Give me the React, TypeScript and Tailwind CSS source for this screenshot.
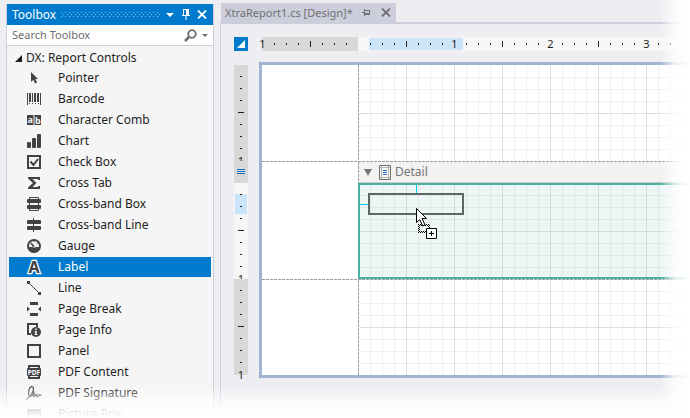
import React, { useLayoutEffect, useRef, useState } from 'react';
import clsx from 'clsx';

interface ToolItem {
  name: string;
  icon: React.ReactNode;
}

interface RulerCellProps {
  index: number;
  label?: string;
  clip?: boolean;
}

const TOOLS: ToolItem[] = [
  { name: 'Pointer', icon: <path d="M5 2v10l2.4-2.2L9 13.5l2-.9-1.7-3.5H12z" /> },
  {
    name: 'Barcode',
    icon: <path d="M1 2h1v12H1zM3 2h2v9H3zM6 2h1v9H6zM8 2h2v9H8zM11 2h2v9h-2zM14 2h1v12h-1zM3 12h1v1H3zM6 12h1v1H6zM9 12h1v1H9zM12 12h1v1h-1z" />,
  },
  {
    name: 'Character Comb',
    icon: (
      <>
        <path d="M1 3h6.500v10H1zM8.500 3H15v10H8.500z" />
        <text x="4.200" y="11" fontSize="9" fontWeight="700" textAnchor="middle" fill="#f5f5f5">a</text>
        <text x="11.800" y="11.500" fontSize="9" fontWeight="700" textAnchor="middle" fill="#f5f5f5">b</text>
      </>
    ),
  },
  {
    name: 'Chart',
    icon: (
      <>
        <rect x="1" y="9" width="4" height="6" rx="1" />
        <rect x="6" y="5" width="4" height="10" rx="1" />
        <rect x="11" y="1" width="4" height="14" rx="1" />
      </>
    ),
  },
  {
    name: 'Check Box',
    icon: <path d="M2 2h12v12H2zM4.500 7.500l3 3.500 4.500-6" fill="none" stroke="currentColor" strokeWidth="2" />,
  },
  { name: 'Cross Tab', icon: <path d="M2 2h12v3h-1.500l-1-1H6.500l4 4-4 4h5l1-1H14v3H2v-1.500L7 8 2 3.500z" /> },
  {
    name: 'Cross-band Box',
    icon: (
      <>
        <rect x="1" y="3" width="14" height="4" rx="1" />
        <rect x="1" y="9" width="14" height="4" rx="1" />
        <path d="M3.500 3V1.500h9V3M3.500 7v2M12.500 7v2M3.500 13v1.500h9V13" fill="none" stroke="currentColor" />
      </>
    ),
  },
  {
    name: 'Cross-band Line',
    icon: (
      <>
        <rect x="1" y="3" width="14" height="4" rx="1" />
        <rect x="1" y="9" width="14" height="4" rx="1" />
        <path d="M7 1h1v14H7z" />
      </>
    ),
  },
  {
    name: 'Gauge',
    icon: (
      <>
        <circle cx="8" cy="8" r="6" fill="none" stroke="currentColor" strokeWidth="2" />
        <path d="M2 9h4.500l1.500 1 1.500-1H14a6 5.500 0 0 1-12 0z" />
        <path d="M5 5l3 4" fill="none" stroke="currentColor" strokeWidth="1.500" />
        <path d="M8 3v1M11 5.500l1-.5" stroke="currentColor" />
      </>
    ),
  },
  {
    name: 'Label',
    icon: (
      <text x="8" y="14" fontSize="16" fontWeight="700" textAnchor="middle" stroke="#fff" strokeWidth="2.500" paintOrder="stroke">A</text>
    ),
  },
  {
    name: 'Line',
    icon: (
      <>
        <path d="M1 1h3v3H1zM12 12h3v3h-3z" />
        <path d="M3 3l10 10" stroke="currentColor" />
      </>
    ),
  },
  { name: 'Page Break', icon: <path d="M4 1h8v3H4zM4 12h8v3H4zM1 5.500L4 8l-3 2.500zM15 5.500L12 8l3 2.500z" /> },
  {
    name: 'Page Info',
    icon: (
      <>
        <path d="M5 12H2V2h9v3" fill="none" stroke="currentColor" strokeWidth="2" />
        <circle cx="10" cy="10" r="5" />
        <path d="M9.200 6.500h1.600V8H9.200zM8.500 9h2.300v3h.7v1h-3v-1h.7v-2h-.7z" fill="#f5f5f5" />
      </>
    ),
  },
  { name: 'Panel', icon: <path d="M2 2h12v12H2z" fill="none" stroke="currentColor" strokeWidth="2" /> },
  {
    name: 'PDF Content',
    icon: (
      <>
        <path d="M3 5V2h10v3M3 11v3h10v-3" fill="none" stroke="currentColor" strokeWidth="2" />
        <rect x="1" y="4" width="14" height="8" rx="1" />
        <text x="8" y="10.500" fontSize="6.500" fontWeight="700" textAnchor="middle" fill="#fff">PDF</text>
      </>
    ),
  },
  {
    name: 'PDF Signature',
    icon: (
      <path
        d="M0 14.500C3 13 8 7 7.500 3.500 7.200.5 3.800 1 3 5c-.6 3.500-.5 6.500 1 6.500s3.500-3 4-4c.4 1.500-.8 4.500 0 4.500s1.700-3 2.500-3-.2 3 .8 3S13 9.500 13.500 9.500s.5 1.500 2 .5"
        fill="none"
        stroke="currentColor"
        strokeWidth="1.200"
      />
    ),
  },
  {
    name: 'Picture Box',
    icon: <path d="M1 3h14v11H1zM3 12h10l-3-4-2 2-2-2z" fillRule="evenodd" />,
  },
];

const SELECTED_TOOL = 'Label';

const TICK_SPACING = 12;

// Minor lines every 12px, major lines every 48px
const GRID =
  'bg-[linear-gradient(to_right,transparent_47px,#dedede_47px),linear-gradient(to_bottom,transparent_47px,#dedede_47px),linear-gradient(to_right,transparent_11px,#f0f0f0_11px),linear-gradient(to_bottom,transparent_11px,#f0f0f0_11px)] bg-[size:48px_48px,48px_48px,12px_12px,12px_12px]';

const DETAIL_GRID =
  'bg-[linear-gradient(to_right,transparent_47px,#d2dcda_47px),linear-gradient(to_bottom,transparent_47px,#d2dcda_47px),linear-gradient(to_right,transparent_11px,#dfe8e6_11px),linear-gradient(to_bottom,transparent_11px,#dfe8e6_11px)] bg-[size:48px_48px,48px_48px,12px_12px,12px_12px] bg-[position:1px_1px] bg-origin-border';

const DashedRow = () => (
  <div className="h-px shrink-0 bg-[repeating-linear-gradient(to_right,#9c9c9c_0_3px,transparent_3px_4px)]" />
);

const DashedColumn = () => (
  <div className="w-px shrink-0 bg-[repeating-linear-gradient(to_bottom,#9c9c9c_0_3px,transparent_3px_4px)]" />
);

const Toolbox = () => (
  <aside className="flex w-52 shrink-0 flex-col border-x border-[#cccedb] bg-[#f5f5f5]" aria-label="Toolbox">
    {/* Title bar */}
    <header className="flex h-[21px] shrink-0 items-center bg-[#007acc] pr-px pl-[5px] text-white">
      <h2 className="w-[49px] text-[12px]">Toolbox</h2>
      <svg className="h-[5px] min-w-0 flex-1" stroke="#80bde6" strokeDasharray="1 3" shapeRendering="crispEdges" aria-hidden="true">
        <line x1="0" y1="0.5" x2="100%" y2="0.5" />
        <line x1="2" y1="2.5" x2="100%" y2="2.5" />
        <line x1="0" y1="4.5" x2="100%" y2="4.5" />
      </svg>
      <button className="flex size-5 items-center justify-center" aria-label="Window options">
        <svg width="8" height="4" viewBox="0 0 8 4" fill="currentColor"><path d="M0 0h8L4 4z" /></svg>
      </button>
      <button className="flex h-5 w-3 items-center justify-center" aria-label="Pin">
        <svg width="8" height="11" viewBox="0 0 8 11" fill="currentColor">
          <path d="M1 0h6v6h1v1H4.500v4h-1V7H0V6h1zM2 1v5h2V1z" fillRule="evenodd" />
        </svg>
      </button>
      <button className="flex size-5 items-center justify-center" aria-label="Close">
        <svg width="10" height="9" viewBox="0 0 10 9" stroke="currentColor" strokeWidth="1.800"><path d="M1 .5l8 8M9 .5l-8 8" /></svg>
      </button>
    </header>

    {/* Search */}
    <div className="flex h-[21px] shrink-0 items-center border-b border-[#cccedb] bg-white pl-[5px] text-[#6d6d6d]">
      <input
        type="text"
        aria-label="Search Toolbox"
        placeholder="Search Toolbox"
        className="min-w-0 flex-1 text-[11px] outline-none placeholder:text-[#6d6d6d]"
      />
      <button aria-label="Search">
        <svg width="13" height="13" viewBox="0 0 13 13" fill="none" stroke="currentColor">
          <circle cx="8" cy="5" r="3.800" strokeWidth="1.800" />
          <path d="M5.500 7.500L1 12" strokeWidth="2.500" />
        </svg>
      </button>
      <button className="flex w-4 justify-center" aria-label="Search options">
        <svg width="6" height="3" viewBox="0 0 6 3" fill="currentColor"><path d="M0 0h6L3 3z" /></svg>
      </button>
    </div>

    {/* Tool list */}
    <div className="px-0.5 pt-0.5 text-[#1e1e1e]">
      <button className="flex h-5 items-center gap-1 pl-1.5 text-left text-[12px]" aria-expanded="true">
        <svg width="7" height="7" viewBox="0 0 7 7" fill="currentColor"><path d="M7 0v7H0z" /></svg>
        DX: Report Controls
      </button>
      <ul className="flex flex-col gap-px">
        {TOOLS.map((tool) => (
          <li key={tool.name}>
            <button
              className={clsx(
                'flex h-5 w-full items-center gap-4 pl-[17px] text-left text-[12px]',
                tool.name === SELECTED_TOOL && 'bg-[#007acc] text-white',
              )}
            >
              <svg className="shrink-0 overflow-visible text-[#424242]" width="16" height="16" viewBox="0 0 16 16" fill="currentColor" aria-hidden="true">
                {tool.icon}
              </svg>
              {tool.name}
            </button>
          </li>
        ))}
      </ul>
    </div>
  </aside>
);

const HorizontalCell: React.FC<RulerCellProps> = ({ index, label }) => {
  if (index % 8 === 0) {
    return (
      <div className="flex w-3 shrink-0 items-center">
        <span className="flex w-px justify-center">{label}</span>
      </div>
    );
  }
  return (
    <div className="flex w-3 shrink-0 items-center">
      <div className={clsx('w-px bg-[#1e1e1e]', index % 8 === 4 ? 'h-1.5' : 'h-0.5')} />
    </div>
  );
};

const VerticalCell: React.FC<RulerCellProps> = ({ index, clip }) => {
  if (index === 8) {
    return (
      <div className={clsx('flex h-3 shrink-0 items-end justify-center', clip && 'overflow-hidden')}>
        <span className="flex h-px items-center">1</span>
      </div>
    );
  }
  return (
    <div className="flex h-3 shrink-0 items-end justify-center">
      <div className={clsx('h-px bg-[#1e1e1e]', index === 4 ? 'w-1.5' : 'w-0.5')} />
    </div>
  );
};

const UNIT = [1, 2, 3, 4, 5, 6, 7, 8];

const HorizontalRuler = () => {
  const scaleRef = useRef<HTMLDivElement>(null);
  const [tickCount, setTickCount] = useState(0);

  // Only as many ticks as fit into the visible part of the page
  useLayoutEffect(() => {
    const update = () => {
      if (scaleRef.current) {
        setTickCount(Math.floor(scaleRef.current.clientWidth / TICK_SPACING));
      }
    };
    update();
    window.addEventListener('resize', update);
    return () => window.removeEventListener('resize', update);
  }, []);

  return (
    <div className="flex h-3.5 min-w-0 flex-1 bg-[#f6f6f6] text-[11px] text-[#1e1e1e]">
      <div className="flex w-24 shrink-0 bg-[#d8d8d8]">
        {UNIT.map((n) => (
          <HorizontalCell key={n} index={n - 1} label="1" />
        ))}
      </div>
      <div ref={scaleRef} className="relative min-w-0 flex-1">
        <div className="absolute inset-y-px left-[11px] w-[94px] bg-[#cce4f7]" />
        <div className="relative flex h-full">
          {Array.from({ length: tickCount }, (_, i) => (
            <HorizontalCell key={i} index={i} label={i === 0 ? '' : String(i / 8)} />
          ))}
        </div>
      </div>
    </div>
  );
};

const VerticalRuler = () => (
  <div className="w-3.5 shrink-0 pt-[3px] text-[11px] text-[#1e1e1e]">
    <div className="h-[118px] bg-[#d8d8d8]">
      {UNIT.map((n) => (
        <VerticalCell key={n} index={n} clip />
      ))}
      <div className="flex flex-col items-center gap-px pt-2">
        <div className="h-px w-2 bg-[#0e70c0]" />
        <div className="h-px w-2 bg-[#0e70c0]" />
        <div className="h-px w-2 bg-[#0e70c0]" />
      </div>
    </div>
    <div className="relative bg-[#f6f6f6]">
      <div className="absolute inset-x-px top-[11px] h-5 bg-[#cce4f7]" />
      <div className="relative">
        {UNIT.map((n) => (
          <VerticalCell key={n} index={n} clip />
        ))}
      </div>
    </div>
    <div className="bg-[#d8d8d8]">
      {UNIT.map((n) => (
        <VerticalCell key={n} index={n} />
      ))}
    </div>
  </div>
);

const DragCursor = () => (
  <svg className="absolute top-[23px] left-14" width="22" height="31" viewBox="0 0 22 31" aria-hidden="true">
    <path
      d="M2 16.500h12M3 17.500h11M2 24.500h12M3 23.500h11M2.500 16v9M3.500 17v8M13.500 17v8M12.500 16v9"
      fill="none"
      stroke="#000"
      strokeDasharray="1 1"
      shapeRendering="crispEdges"
    />
    <path d="M.5.5v14l3.200-3 3 6.500 2.300-1-2.900-6.500h4.400z" fill="#fff" stroke="#000" />
    <path d="M10.500 20.500h10v10h-10z" fill="#fff" stroke="#000" />
    <path d="M15 23h1v2h2v1h-2v2h-1v-2h-2v-1h2z" fill="#000" />
  </svg>
);

const ReportSurface = () => (
  <div className="flex min-w-0 flex-1 flex-col border-y-3 border-l-3 border-[#a0b4d2] bg-white">
    <div className="flex h-24">
      <div className="w-24 shrink-0" />
      <DashedColumn />
      <div className="flex-1 pt-px">
        <div className={clsx('h-full', GRID)} />
      </div>
    </div>
    <DashedRow />

    {/* Detail band */}
    <div className="flex h-[21px]">
      <div className="w-24 shrink-0" />
      <DashedColumn />
      <button className="flex flex-1 items-center border-b border-[#c8c8c8] bg-[#f2f2f2] pl-[5px] text-left text-[12px] text-[#767676]">
        <svg width="8" height="7" viewBox="0 0 8 7" fill="currentColor"><path d="M0 0h8L4 7z" /></svg>
        <svg className="mr-1 ml-[7px]" width="12" height="15" viewBox="0 0 12 15" fill="none">
          <path d="M.5.5h11v14H.5z" fill="#f8f8f8" stroke="#707070" />
          <path d="M2.500 1v13M9.500 1v13M1 2.500h10M1 12.500h10" stroke="#b4b4b4" />
          <path d="M4 5.500h4M4 7.500h4M4 9.500h4" stroke="#2f6db5" />
        </svg>
        Detail
      </button>
    </div>
    <div className="flex h-24">
      <div className="w-24 shrink-0" />
      <div className={clsx('relative flex-1 border-y-2 border-l-2 border-[#4ab2a1] bg-[#edf6f5]', DETAIL_GRID)}>
        <div className="absolute top-0 left-14 h-2 w-px bg-[#00c8ff]" />
        <div className="absolute top-[19px] left-0 h-px w-2 bg-[#00c8ff]" />
        <div className="absolute top-2 left-2 h-[22px] w-24 border-2 border-[#5c6766]" />
        <DragCursor />
      </div>
    </div>
    <DashedRow />

    <div className="flex h-[95px]">
      <div className="w-24 shrink-0" />
      <DashedColumn />
      <div className={clsx('flex-1', GRID)} />
    </div>
  </div>
);

const Designer = () => (
  <main className="flex min-w-0 flex-1 flex-col">
    {/* Document tab */}
    <div className="flex h-[19px] shrink-0">
      <div className="ml-px flex w-[175px] items-center bg-[#cccedb] pl-1 text-[11px] text-[#717171]">
        <span className="flex-1 whitespace-nowrap">XtraReport1.cs [Design]*</span>
        <button className="flex w-5 justify-center" aria-label="Pin tab">
          <svg width="8" height="7" viewBox="0 0 8 7" fill="currentColor">
            <path d="M0 3h2V0h1v1h5v5H3v1H2V4H0zM3 2v2h4V2z" fillRule="evenodd" />
          </svg>
        </button>
        <button className="flex w-5 justify-center" aria-label="Close tab">
          <svg width="10" height="9" viewBox="0 0 10 9" stroke="currentColor" strokeWidth="1.800"><path d="M1 .5l8 8M9 .5l-8 8" /></svg>
        </button>
      </div>
    </div>
    <div className="flex-1 border-t-2 border-l border-[#cccedb] pt-[13px] pl-[13px]">
      <div className="flex gap-3.5">
        <button className="flex size-3.5 shrink-0 items-center justify-center bg-[#007acc]" aria-label="Report tasks">
          <svg width="8" height="8" viewBox="0 0 8 8" fill="#fff"><path d="M8 0v8H0z" /></svg>
        </button>
        <HorizontalRuler />
      </div>
      <div className="flex gap-[11px] pt-[11px]">
        <VerticalRuler />
        <ReportSurface />
      </div>
    </div>
  </main>
);

export default function App() {
  return (
    <div className="relative flex h-screen gap-1.5 overflow-hidden bg-[#eeeef2] pl-1.5 font-['Noto_Sans','Open_Sans',sans-serif] leading-4">
      <div className="flex pt-1">
        <Toolbox />
      </div>
      <div className="flex min-w-0 flex-1 pt-[3px]">
        <Designer />
      </div>

      {/* Edges fade into the page */}
      <div className="pointer-events-none absolute inset-y-0 right-0 w-[30px] bg-linear-to-r from-transparent via-white/80 to-white" />
      <div className="pointer-events-none absolute inset-x-0 bottom-0 h-8 bg-linear-to-b from-transparent via-white/70 to-white" />
    </div>
  );
}
